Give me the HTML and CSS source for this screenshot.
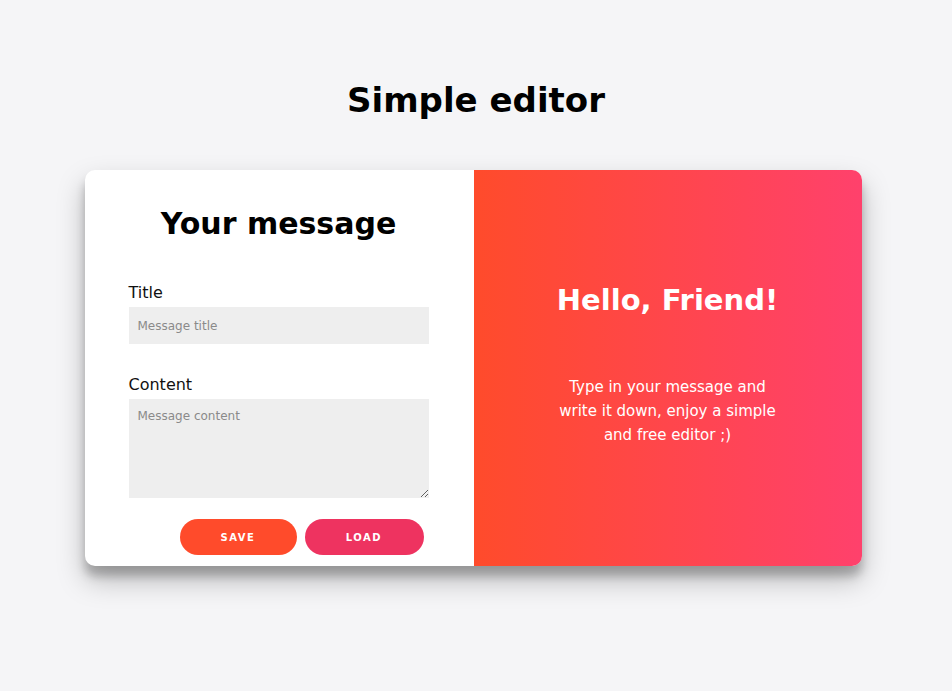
FILE: index.html
```html
<!DOCTYPE html>
<html lang="en">
<head>
<meta charset="utf-8">
<title>Simple editor</title>
<link rel="stylesheet" href="styles.css">
</head>
<body>
  <h1 class="page-title">Simple editor</h1>
  <div class="card">
    <form class="editor" onsubmit="return false">
      <h2 class="editor-title">Your message</h2>
      <label class="field-label" for="title">Title</label>
      <input class="field-input" id="title" type="text" placeholder="Message title">
      <label class="field-label field-label--content" for="content">Content</label>
      <textarea class="field-textarea" id="content" placeholder="Message content"></textarea>
      <div class="actions">
        <button class="btn btn-save" type="button">Save</button>
        <button class="btn btn-load" type="button">Load</button>
      </div>
    </form>
    <div class="overlay">
      <h2 class="overlay-title">Hello, Friend!</h2>
      <p class="overlay-text">Type in your message and write it down, enjoy a simple and free editor ;)</p>
    </div>
  </div>
</body>
</html>
```

FILE: styles.css
```css
* { box-sizing: border-box; }

body {
  margin: 0;
  min-height: 691px;
  background: #f5f5f7;
  font-family: "DejaVu Sans", "Open Sans", sans-serif;
  display: flex;
  flex-direction: column;
  align-items: center;
}

.page-title {
  margin: 78px 0 0;
  height: 92px;
  font-size: 34px;
  line-height: 44px;
  font-weight: 700;
  color: #000;
  letter-spacing: 0;
}

.card {
  width: 777px;
  height: 396px;
  margin-right: 6px;
  background: #fff;
  border-radius: 10px;
  box-shadow: 0 14px 28px rgba(0,0,0,0.25), 0 10px 10px rgba(0,0,0,0.22);
  display: grid;
  grid-template-columns: 389px 388px;
  overflow: hidden;
}

.editor {
  display: flex;
  flex-direction: column;
  padding: 33px 45px 0 44px;
}

.editor-title {
  margin: 0 0 37px;
  text-align: center;
  font-size: 30px;
  line-height: 42px;
  font-weight: 700;
  color: #000;
}

.field-label {
  font-size: 16px;
  line-height: 22px;
  color: #111;
  font-weight: 400;
  margin-bottom: 3px;
}

.field-label--content { margin-top: 30px; }

.field-input,
.field-textarea {
  width: 300px;
  border: none;
  background: #eee;
  font-family: "DejaVu Sans", "Open Sans", sans-serif;
  font-size: 12px;
  color: #333;
  padding: 0 9px;
  outline: none;
}

.field-input { height: 37px; }

.field-textarea {
  height: 99px;
  padding-top: 10px;
  resize: vertical;
}

.field-input::placeholder,
.field-textarea::placeholder { color: #8a8a8a; }

.actions {
  display: flex;
  gap: 8px;
  margin: 21px 0 0 51px;
}

.btn {
  height: 36px;
  border: none;
  border-radius: 20px;
  color: #fff;
  font-family: "DejaVu Sans", sans-serif;
  font-size: 10px;
  font-weight: 700;
  letter-spacing: 1.5px;
  text-transform: uppercase;
  cursor: pointer;
}

.btn-save { width: 117px; background: #ff4b2b; }
.btn-load { width: 119px; background: #ee3360; }

.overlay {
  background: linear-gradient(to right, #ff4b2b, #ff416c);
  color: #fff;
  display: flex;
  flex-direction: column;
  align-items: center;
  padding-top: 109px;
}

.overlay-title {
  margin: 0;
  font-size: 29px;
  line-height: 42px;
  font-weight: 700;
}

.overlay-text {
  margin: 54px 0 0;
  width: 228px;
  text-align: center;
  font-size: 15px;
  line-height: 24px;
}
```
